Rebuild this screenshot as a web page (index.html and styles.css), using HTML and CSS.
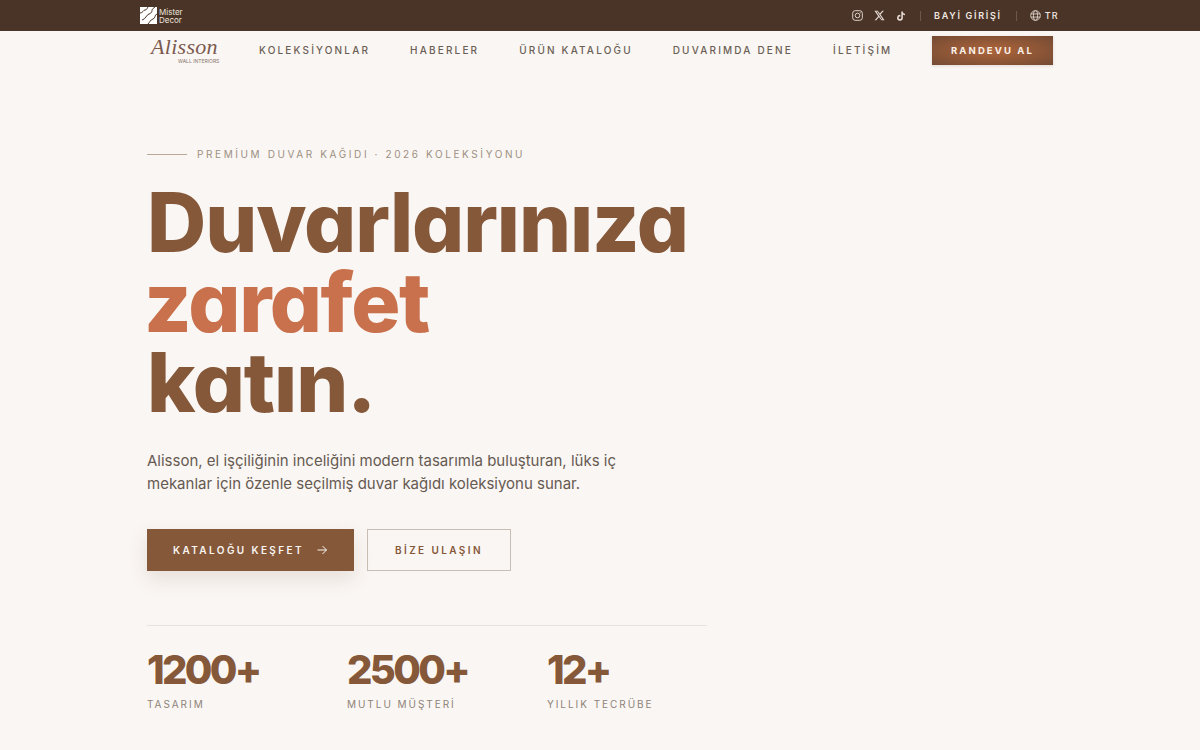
FILE: index.html
```html
<!DOCTYPE html>
<html lang="tr">
<head>
    <meta charset="UTF-8">
    <meta name="viewport" content="width=device-width, initial-scale=1.0">
    <title>Alisson Wall Interiors</title>
    <link rel="stylesheet" href="styles.css">
</head>
<body>
    <div class="topbar">
        <a class="brand-small" href="#">
            <svg class="brand-mark" width="17" height="17" viewBox="0 0 17 17">
                <rect width="17" height="17" fill="#fff"/>
                <path d="M0 6C3 6 3 3 5 3S7 1 8 0M2 13C6 12 6 8 9 7S12 4 12 3 14 1 15 0M8 17C10 15 10 13 13 12S14 8 17 7" fill="none" stroke="#4a3428" stroke-width="1"/>
            </svg>
            <span class="brand-name">Mister<br>Decor</span>
        </a>
        <div class="topbar-right">
            <div class="socials">
                <svg width="11" height="11" viewBox="0 0 24 24" fill="none" stroke="#e9dfd7" stroke-width="2">
                    <rect x="1.500" y="1.500" width="21" height="21" rx="5.500"/>
                    <circle cx="12" cy="12" r="5"/>
                    <circle cx="18" cy="6" r="1.200" fill="#e9dfd7" stroke="none"/>
                </svg>
                <svg width="11" height="11" viewBox="0 0 24 24" fill="#e9dfd7">
                    <path d="M18.200 1.500h3.400l-7.400 8.500L23 22.500h-6.800l-5.300-7-6.100 7H1.300l7.900-9L1 1.500h7l4.800 6.400zm-1.200 19h1.900L7 3.400H5z"/>
                </svg>
                <svg width="10" height="10" viewBox="0 0 24 24" fill="#e9dfd7">
                    <path d="M16.500 1h-3.700v15.300a3.300 3.300 0 1 1-3.300-3.400c.4 0 .7 0 1 .2V9.300a7 7 0 1 0 6 6.900V8.500a8.500 8.500 0 0 0 5 1.600V6.400a5 5 0 0 1-5-5.400z"/>
                </svg>
            </div>
            <span class="sep"></span>
            <a class="dealer" href="#">BAYİ GİRİŞİ</a>
            <span class="sep"></span>
            <a class="lang" href="#">
                <svg width="11" height="11" viewBox="0 0 24 24" fill="none" stroke="#e9dfd7" stroke-width="1.800">
                    <circle cx="12" cy="12" r="10.500"/>
                    <ellipse cx="12" cy="12" rx="4.500" ry="10.500"/>
                    <path d="M2 8.500h20M2 15.500h20"/>
                </svg>
                TR
            </a>
        </div>
    </div>

    <nav class="navbar">
        <a class="logo" href="#">
            <span class="logo-script">Alisson</span>
            <span class="logo-sub">WALL INTERIORS</span>
        </a>
        <div class="nav-links">
            <a href="#">KOLEKSİYONLAR</a>
            <a href="#">HABERLER</a>
            <a href="#">ÜRÜN KATALOĞU</a>
            <a href="#">DUVARIMDA DENE</a>
            <a href="#">İLETİŞİM</a>
        </div>
        <a class="nav-cta" href="#">RANDEVU AL</a>
    </nav>

    <main class="hero">
        <div class="eyebrow">
            <span class="eyebrow-line"></span>
            <span>PREMİUM DUVAR KAĞIDI · 2026 KOLEKSİYONU</span>
        </div>
        <h1 class="hero-title">Duvarlarınıza<br><span class="accent">zarafet</span><br>katın.</h1>
        <p class="hero-text">Alisson, el işçiliğinin inceliğini modern tasarımla buluşturan, lüks iç mekanlar için özenle seçilmiş duvar kağıdı koleksiyonu sunar.</p>
        <div class="hero-actions">
            <a class="btn btn-primary" href="#">
                KATALOĞU KEŞFET
                <svg width="12" height="12" viewBox="0 0 24 24" fill="none" stroke="#f9f5f1" stroke-width="2">
                    <path d="M3 12h18M13 4l8 8-8 8"/>
                </svg>
            </a>
            <a class="btn btn-outline" href="#">BİZE ULAŞIN</a>
        </div>
        <div class="stats">
            <div class="stat">
                <div class="stat-num">1200+</div>
                <div class="stat-label">TASARIM</div>
            </div>
            <div class="stat">
                <div class="stat-num">2500+</div>
                <div class="stat-label">MUTLU MÜŞTERİ</div>
            </div>
            <div class="stat">
                <div class="stat-num">12+</div>
                <div class="stat-label">YILLIK TECRÜBE</div>
            </div>
        </div>
    </main>
</body>
</html>
```

FILE: styles.css
```css
* {
    box-sizing: border-box;
}

body {
    margin: 0;
    background-color: #faf6f3;
    font-family: Inter, "Liberation Sans", sans-serif;
    color: #5f5249;
    overflow: hidden;
}

a {
    text-decoration: none;
    color: inherit;
}

.topbar {
    height: 31px;
    background-color: #4a3428;
    padding: 0 141px 0 140px;
    display: flex;
    align-items: center;
    justify-content: space-between;
}

.brand-small {
    display: flex;
    align-items: center;
    gap: 2px;
}

.brand-name {
    font-size: 8px;
    line-height: 8px;
    color: #ece4dd;
}

.topbar-right {
    display: flex;
    align-items: center;
    color: #f0e7e0;
}

.socials {
    display: flex;
    align-items: center;
    gap: 11px;
}

.sep {
    width: 1px;
    height: 10px;
    background-color: #6d5748;
    margin: 0 13px 0 14px;
}

.dealer {
    font-size: 9px;
    font-weight: 600;
    letter-spacing: 1.700px;
}

.lang {
    display: flex;
    align-items: center;
    gap: 4px;
    font-size: 9px;
    font-weight: 500;
    letter-spacing: 1.300px;
}

.navbar {
    height: 38px;
    padding: 0 147px 0 151px;
    display: flex;
    align-items: center;
}

.logo {
    width: 108px;
    display: flex;
    flex-direction: column;
    color: #7a5a50;
}

.logo-script {
    font-family: "Liberation Serif", serif;
    font-style: italic;
    font-size: 22px;
    line-height: 20px;
    letter-spacing: 0.300px;
}

.logo-sub {
    font-size: 5px;
    line-height: 6px;
    margin: 1px 0 0 27px;
    color: #8a756b;
}

.nav-links {
    flex: 1;
    display: flex;
    gap: 40px;
    font-size: 10px;
    font-weight: 500;
    letter-spacing: 2.170px;
    color: #6a5e55;
}

.nav-cta {
    width: 121px;
    height: 29px;
    display: flex;
    align-items: center;
    justify-content: center;
    font-size: 9.500px;
    font-weight: 700;
    letter-spacing: 2.100px;
    color: #f9f1e9;
    background: radial-gradient(ellipse at center, #ad653a 0%, #744a34 100%);
    box-shadow: 0 1px 3px rgba(90, 60, 40, 0.15);
}

.hero {
    width: 560px;
    margin-left: 147px;
    padding-top: 79px;
}

.eyebrow {
    display: flex;
    align-items: center;
    gap: 10px;
    font-size: 10px;
    line-height: 12px;
    letter-spacing: 2.600px;
    color: #9c9083;
}

.eyebrow-line {
    width: 40px;
    height: 1px;
    background-color: #b8a898;
}

.hero-title {
    margin: 23px 0 0;
    font-size: 82px;
    line-height: 80px;
    font-weight: 800;
    letter-spacing: -1.100px;
    color: #85583a;
    font-feature-settings: "cv11";
}

.accent {
    margin-left: -3px;
    letter-spacing: -1.500px;
    color: #c9714c;
}

.hero-text {
    margin: 26px 0 0;
    width: 490px;
    font-size: 15px;
    line-height: 23px;
    color: #665a51;
}

.hero-actions {
    margin-top: 34px;
    display: flex;
    gap: 13px;
}

.btn {
    height: 42px;
    display: flex;
    align-items: center;
    justify-content: center;
    font-size: 10px;
    font-weight: 600;
    letter-spacing: 2.400px;
}

.btn-primary {
    width: 207px;
    gap: 12px;
    background-color: #85583a;
    color: #f9f5f1;
    box-shadow: 0 8px 20px rgba(90, 60, 40, 0.12);
}

.btn-outline {
    width: 144px;
    border: 1px solid #c8bdb3;
    color: #85583a;
}

.stats {
    margin-top: 54px;
    border-top: 1px solid #e9e3dd;
    padding-top: 22px;
    display: flex;
}

.stat {
    flex: none;
    width: 200px;
}

.stat-num {
    font-size: 40px;
    line-height: 44px;
    font-weight: 800;
    letter-spacing: -2.700px;
    color: #85583a;
}

.stat-label {
    margin-top: 6px;
    font-size: 10px;
    line-height: 12px;
    letter-spacing: 1.950px;
    color: #8e8379;
}
```
